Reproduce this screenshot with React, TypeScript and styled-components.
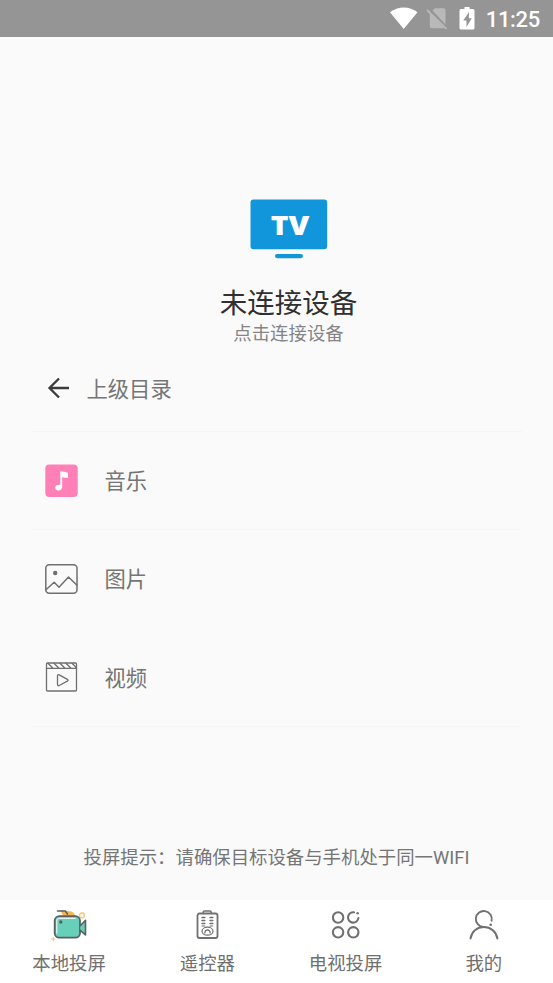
import React from 'react';
import styled, { createGlobalStyle } from 'styled-components';

const GlobalStyle = createGlobalStyle`
  * { box-sizing: border-box; }
  body { margin: 0; background: #fafafa; }
`;

const Screen = styled.div`
  display: flex;
  flex-direction: column;
  width: 553px;
  height: 983px;
  overflow: hidden;
  background: #fafafa;
  color: #757575;
  font-family: Roboto, 'Noto Sans CJK SC', sans-serif;
`;

const StatusBar = styled.header`
  display: flex;
  align-items: center;
  justify-content: flex-end;
  height: 37px;
  padding-right: 13px;
  background: #959595;
  color: #fff;
`;

const StatusIcons = styled.svg`
  display: block;
  width: 90px;
  height: 37px;
  margin-right: 7px;
`;

const Clock = styled.time`
  font-size: 22px;
  font-weight: 500;
  line-height: 37px;
  padding-top: 2px;
  letter-spacing: -0.3px;
`;

const Device = styled.button`
  display: flex;
  flex-direction: column;
  align-items: center;
  height: 308px;
  padding: 158px 0 0 24px;
  border: 0;
  background: none;
  font-family: inherit;
`;

const TvIcon = styled.svg`
  display: block;
  width: 84px;
  height: 70px;
`;

const DeviceTitle = styled.span`
  margin-top: 19px;
  color: #303030;
  font-size: 27.5px;
  line-height: 39px;
`;

const DeviceHint = styled.span`
  color: #858585;
  font-size: 18.4px;
  line-height: 22px;
`;

const Directory = styled.main`
  display: flex;
  flex-direction: column;
  height: 382px;
  margin: 0 31px;
`;

const ParentRow = styled.button`
  display: flex;
  align-items: center;
  height: 87px;
  padding: 0 0 0 16px;
  border: 0;
  border-bottom: 1px solid #f5f5f5;
  background: none;
  color: inherit;
  font-family: inherit;
  font-size: 21.3px;
  gap: 15.5px;
`;

const RowLabel = styled.span`
  padding-top: 3px;
  line-height: 32px;
`;

const FileRow = styled.button<{ $divider?: boolean }>`
  display: flex;
  align-items: center;
  height: 98.3px;
  padding: 0 0 0 12px;
  gap: 25.5px;
  border: 0;
  border-bottom: 1px solid ${(p) => (p.$divider ? '#f6f6f6' : 'transparent')};
  background: none;
  color: inherit;
  font-family: inherit;
  font-size: 21.3px;
`;

const Icon = styled.svg<{ $size: number }>`
  display: block;
  flex: none;
  width: ${(p) => p.$size}px;
  height: ${(p) => p.$size}px;
  fill: none;
  stroke: #707070;
  stroke-width: 1.5;
  stroke-linecap: round;
  stroke-linejoin: round;
`;

const Tip = styled.p`
  flex: 1;
  margin: 0;
  padding-top: 117px;
  text-align: center;
  font-size: 18.4px;
  line-height: 28px;
  white-space: nowrap;
`;

const TabBar = styled.nav`
  display: grid;
  grid-template-columns: repeat(4, 1fr);
  height: 83px;
  background: #fff;
`;

const Tab = styled.button`
  display: flex;
  flex-direction: column;
  align-items: center;
  padding: 5px 0 0;
  border: 0;
  background: none;
  color: #707070;
  font-family: inherit;
  font-size: 18.4px;
`;

const TabLabel = styled.span`
  margin-top: 5px;
  line-height: 28px;
`;

const BackIcon = () => (
  <Icon $size={24} viewBox="0 0 24 24">
    <path d="M22 12H3M12 2.5 2.5 12l9.5 9.5" stroke="#3c3c3c" strokeWidth="2.3" strokeLinecap="butt" strokeLinejoin="miter" />
  </Icon>
);

const MusicIcon = () => (
  <Icon $size={36} viewBox="0 0 36 36">
    <rect x="2.3" y="1.5" width="32.4" height="32.4" rx="4" fill="#ff80b7" stroke="none" />
    <path d="M17.3 8.3c3 0 5 .9 7.6 1.4v5.1c-2.2.2-4-.3-5.7-.9v9.6c0 2.4-1.7 4-3.7 4-1.9 0-3.3-1.1-3.3-2.8 0-2.1 2-3.4 5.1-3z" fill="#fff" stroke="none" />
  </Icon>
);

const PictureIcon = () => (
  <Icon $size={36} viewBox="0 0 36 36">
    <rect x="2.8" y="3.8" width="31.2" height="28.4" rx="3.5" />
    <circle cx="12.2" cy="12" r="2.2" fill="#707070" stroke="none" />
    <path d="m3.2 28.5 8-7.3 4.8 5L25.5 16l8.2 8" />
  </Icon>
);

const VideoIcon = () => (
  <Icon $size={36} viewBox="0 0 36 36">
    <rect x="3.5" y="4" width="30" height="28" rx="1" strokeWidth="1.3" />
    <path d="M3.5 9.3h30M5 4.3l5 4.9M11 4.3l5 4.9M17 4.3l5 4.9M23 4.3l5 4.9M29 4.3l4.5 4.5" strokeWidth="1.3" />
    <path d="M14.5 16.8v8.8c0 1.1.8 1.4 1.7.9l8.2-4.4c.9-.5.9-1.2 0-1.7l-8.2-4.5c-.9-.5-1.7-.2-1.7.9z" strokeWidth="1.3" />
  </Icon>
);

const CameraIcon = () => (
  <Icon $size={40} viewBox="1 0.8 40 40">
    <path d="M12.500 6c1 2.500 2 4.500 3 6h11.600c-.4-3.600-3-5-5.800-5z" fill="#f6b652" stroke="none" />
    <path d="M9.500 6.800h7.800l2.200 2.900" stroke="#5b6063" strokeWidth="1.600" />
    <circle cx="34" cy="11.2" r="2.4" stroke="#f8c578" strokeWidth="1.3" />
    <rect x="6.700" y="12" width="25.300" height="21.5" rx="4.5" fill="#68cfb8" stroke="#5b6063" strokeWidth="1.8" />
    <path d="M8.800 29V16.7c0-1.8.8-2.6 2.5-2.6h16" stroke="#fff" strokeWidth="1" />
    <path d="m32.3 21.5 5.2-5.4v14.6l-5.2-4.6" fill="#68cfb8" stroke="#5b6063" strokeWidth="1.6" />
    <circle cx="12.8" cy="17.8" r="1.7" fill="#5b6063" stroke="none" />
    <path d="M5.3 33.2v3.2M3.7 34.8h3.2" stroke="#f8c578" strokeWidth="1.1" />
  </Icon>
);

const RemoteIcon = () => (
  <Icon $size={40} viewBox="0 0 40 40">
    <path d="M16.2 8.5V7.3c0-.8.6-1.3 1.4-1.3h5.2c.8 0 1.4.5 1.4 1.3v1.2" />
    <rect x="10.5" y="8.5" width="20" height="24.5" rx="2" strokeWidth="1.8" />
    <path d="M15 12.5h2.8M15 15.5h2.8M15 18.5h2.8M23 12.5h2.8M23 15.5h2.8M23 18.5h2.8" strokeWidth="1.5" />
    <path d="M15 21h2.8M23 21h2.8" strokeWidth="1" />
    <ellipse cx="20.5" cy="26.2" rx="5.500" ry="4" strokeWidth="1.2" />
    <path d="M17.8 28c.1-2.2 1.1-3.2 2.7-3.2s2.6 1 2.7 3.2" strokeWidth="1.2" />
  </Icon>
);

const AppsIcon = () => (
  <Icon $size={40} viewBox="0.3 -0.3 40 40">
    <g strokeWidth="2.1">
      <circle cx="12.4" cy="12.2" r="5.2" />
      <circle cx="12.4" cy="27" r="5.2" />
      <circle cx="27.6" cy="27" r="5.2" />
      <path d="M28.3 7a5.2 5.2 0 1 0 4.4 5.7" />
    </g>
    <circle cx="31.9" cy="8" r="1.2" fill="#707070" stroke="none" />
  </Icon>
);

const ProfileIcon = () => (
  <Icon $size={40} viewBox="0 -0.5 40 40">
    <g strokeWidth="1.9">
      <path d="M19.8 21.5a8 8 0 1 1 7.8-6.2M6.5 33c1-6.8 6.4-11.5 13.3-11.5S32.4 26.2 33.4 33" />
    </g>
    <circle cx="26.7" cy="19.3" r="1.3" fill="#707070" stroke="none" />
  </Icon>
);

const files = [
  { label: '音乐', Glyph: MusicIcon, divider: true },
  { label: '图片', Glyph: PictureIcon, divider: false },
  { label: '视频', Glyph: VideoIcon, divider: true },
];

const tabs = [
  { label: '本地投屏', Glyph: CameraIcon },
  { label: '遥控器', Glyph: RemoteIcon },
  { label: '电视投屏', Glyph: AppsIcon },
  { label: '我的', Glyph: ProfileIcon },
];

export default function App() {
  return (
    <Screen>
      <GlobalStyle />
      <StatusBar>
        <StatusIcons viewBox="0 0 90 37" aria-hidden="true">
          <path d="M1 12.2C9 5.8 20.5 5.8 28.5 12.2L14.7 29z" fill="#fff" />
          <path d="M43.5 10.5 46 8.2h8.5c1.2 0 2 .8 2 2v14.3z" fill="#b9b9b9" />
          <path d="M40.8 13.2 55.6 28.2H42.8c-1.2 0-2-.8-2-2z" fill="#b9b9b9" />
          <path d="m38 10 19.5 18.8" stroke="#b9b9b9" strokeWidth="1.8" />
          <path fillRule="evenodd" d="M72.5 9h3V7h5v2h3c1.2 0 2 .5 2 1.5v17.5c0 1-.8 1.5-2 1.5h-11c-1.2 0-2-.5-2-1.5V10.5c0-1 .8-1.5 2-1.5zm7.5 3-5.7 8.500h3.2v6.500l5.2-8.800h-2.900z" fill="#fff" />
        </StatusIcons>
        <Clock>11:25</Clock>
      </StatusBar>
      <Device>
        <TvIcon viewBox="0 0 84 70" aria-hidden="true">
          <rect x="3.5" y="4.5" width="76.7" height="49.7" rx="3" fill="#1296db" />
          <rect x="28" y="59" width="28" height="4.2" rx="2.1" fill="#1296db" />
          <text x="43" y="40" textAnchor="middle" textLength="38.5" lengthAdjust="spacingAndGlyphs" fill="#fff" fontFamily="Open Sans, sans-serif" fontSize="27" fontWeight="800">TV</text>
        </TvIcon>
        <DeviceTitle>未连接设备</DeviceTitle>
        <DeviceHint>点击连接设备</DeviceHint>
      </Device>
      <Directory>
        <ParentRow>
          <BackIcon />
          <RowLabel>上级目录</RowLabel>
        </ParentRow>
        {files.map(({ label, Glyph, divider }) => (
          <FileRow key={label} $divider={divider}>
            <Glyph />
            <RowLabel>{label}</RowLabel>
          </FileRow>
        ))}
      </Directory>
      <Tip>投屏提示：请确保目标设备与手机处于同一WIFI</Tip>
      <TabBar>
        {tabs.map(({ label, Glyph }) => (
          <Tab key={label}>
            <Glyph />
            <TabLabel>{label}</TabLabel>
          </Tab>
        ))}
      </TabBar>
    </Screen>
  );
}
